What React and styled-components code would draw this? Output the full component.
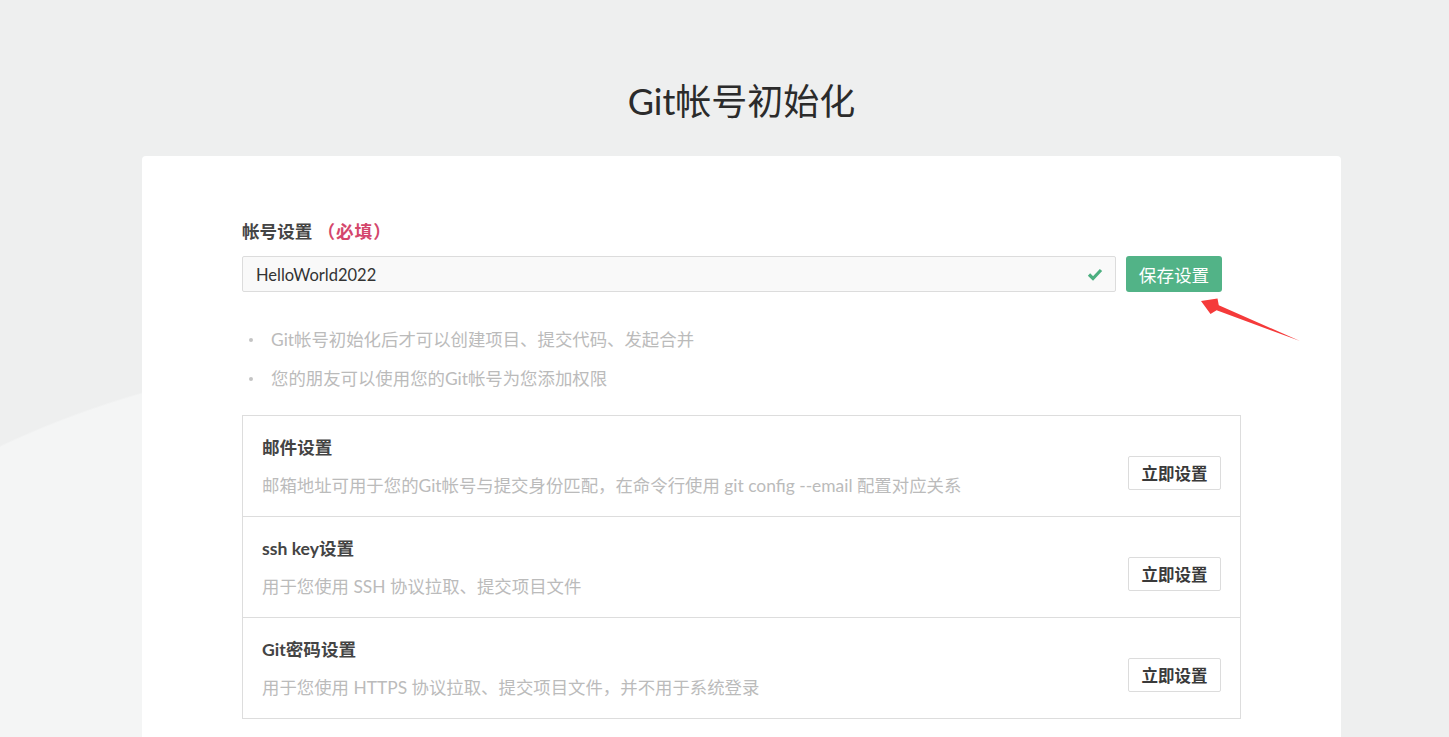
import styled, { createGlobalStyle } from "styled-components";

const GlobalStyle = createGlobalStyle`
  html, body {
    margin: 0;
    padding: 0;
  }
  body {
    font-family: Lato, "Noto Sans CJK SC", sans-serif;
    background-color: #eeefef;
    background-image: radial-gradient(circle 940px at 400px 1296px, #f4f5f5 99.8%, rgba(244, 245, 245, 0) 100%);
    background-repeat: no-repeat;
    min-height: 737px;
    overflow: hidden;
  }
`;

const settings = [
  {
    title: "邮件设置",
    desc: "邮箱地址可用于您的Git帐号与提交身份匹配，在命令行使用 git config --email 配置对应关系",
  },
  { title: "ssh key设置", desc: "用于您使用 SSH 协议拉取、提交项目文件" },
  {
    title: "Git密码设置",
    desc: "用于您使用 HTTPS 协议拉取、提交项目文件，并不用于系统登录",
  },
];

const tips = [
  "Git帐号初始化后才可以创建项目、提交代码、发起合并",
  "您的朋友可以使用您的Git帐号为您添加权限",
];

function App() {
  return (
    <Page>
      <GlobalStyle />
      <Title>Git帐号初始化</Title>
      <Card>
        <Label>
          帐号设置<Required>（必填）</Required>
        </Label>
        <InputRow>
          <InputBox>
            <Input defaultValue="HelloWorld2022" />
            <svg width="16" height="14" viewBox="0 0 16 14">
              <path
                d="M2 6.5 L6 10.5 L14 2"
                fill="none"
                stroke="#4caf80"
                strokeWidth="3.2"
              />
            </svg>
          </InputBox>
          <SaveButton>保存设置</SaveButton>
          <Arrow width="110" height="50" viewBox="0 0 110 50">
            <polygon
              points="6,6 22.5,3.5 23.8,10.2 105,46 21.6,15.2 15.5,19"
              fill="#f53a3a"
            />
          </Arrow>
        </InputRow>
        <Tips>
          {tips.map((t) => (
            <Tip key={t}>{t}</Tip>
          ))}
        </Tips>
        <SettingList>
          {settings.map((s) => (
            <SettingRow key={s.title}>
              <SettingText>
                <SettingTitle>{s.title}</SettingTitle>
                <SettingDesc>{s.desc}</SettingDesc>
              </SettingText>
              <SetButton>立即设置</SetButton>
            </SettingRow>
          ))}
        </SettingList>
      </Card>
    </Page>
  );
}

const Page = styled.main`
  display: flex;
  flex-direction: column;
  align-items: center;
  padding: 79px 0 0 34px;
`;

const Title = styled.h1`
  margin: 0;
  font-size: 36px;
  line-height: 44px;
  font-weight: 400;
  color: #2b2b2b;
`;

const Card = styled.section`
  margin-top: 33px;
  width: 1199px;
  box-sizing: border-box;
  padding: 64px 100px 100px;
  background: #fff;
  border-radius: 4px;
`;

const Label = styled.div`
  font-size: 17.6px;
  line-height: 24px;
  font-weight: 700;
  color: #454545;
`;

const Required = styled.span`
  color: #d4466c;
  padding: 0 3px 0 5px;
  letter-spacing: 1px;
`;

const InputRow = styled.div`
  position: relative;
  display: flex;
  margin-top: 12px;
  height: 36px;
`;

const InputBox = styled.div`
  width: 874px;
  box-sizing: border-box;
  display: flex;
  align-items: center;
  padding: 1px 12px 0 13px;
  background: #f9f9f9;
  border: 1px solid #dcdcdc;
  border-radius: 2px;
`;

const Input = styled.input`
  flex: 1;
  border: none;
  outline: none;
  background: transparent;
  padding: 0;
  font-family: Lato, "Noto Sans CJK SC", sans-serif;
  font-size: 16.5px;
  color: #333;
`;

const SaveButton = styled.button`
  margin-left: 10px;
  width: 96px;
  height: 36px;
  border: none;
  border-radius: 3px;
  background: #52b387;
  color: #fff;
  font-family: Lato, "Noto Sans CJK SC", sans-serif;
  font-size: 17.6px;
  padding: 0;
  cursor: pointer;
`;

const Arrow = styled.svg`
  position: absolute;
  left: 953px;
  top: 39px;
`;

const Tips = styled.ul`
  list-style: none;
  margin: 28px 0 0;
  padding: 0;
`;

const Tip = styled.li`
  display: flex;
  align-items: center;
  font-size: 17.4px;
  line-height: 39px;
  color: #bbbbbb;

  &::before {
    content: "";
    width: 4px;
    height: 4px;
    border-radius: 50%;
    background: #c4c4c4;
    margin: 0 18px 0 7px;
  }
`;

const SettingList = styled.div`
  margin-top: 17px;
  border: 1px solid #dddddd;
`;

const SettingRow = styled.div`
  display: flex;
  align-items: center;
  padding: 20px 19px 17px 19px;

  & + & {
    border-top: 1px solid #dddddd;
  }
`;

const SettingText = styled.div`
  flex: 1;
  display: flex;
  flex-direction: column;
  gap: 13px;
`;

const SettingTitle = styled.div`
  font-size: 17.6px;
  line-height: 24px;
  font-weight: 700;
  color: #444;
`;

const SettingDesc = styled.div`
  font-size: 17.4px;
  line-height: 26px;
  color: #bbbbbb;
`;

const SetButton = styled.button`
  margin-top: 11px;
  width: 93px;
  height: 34px;
  border: 1px solid #dcdcdc;
  border-radius: 2px;
  background: #fff;
  color: #3a3a3a;
  font-family: Lato, "Noto Sans CJK SC", sans-serif;
  font-size: 16.5px;
  font-weight: 600;
  padding: 0;
  cursor: pointer;
`;

export default App;
